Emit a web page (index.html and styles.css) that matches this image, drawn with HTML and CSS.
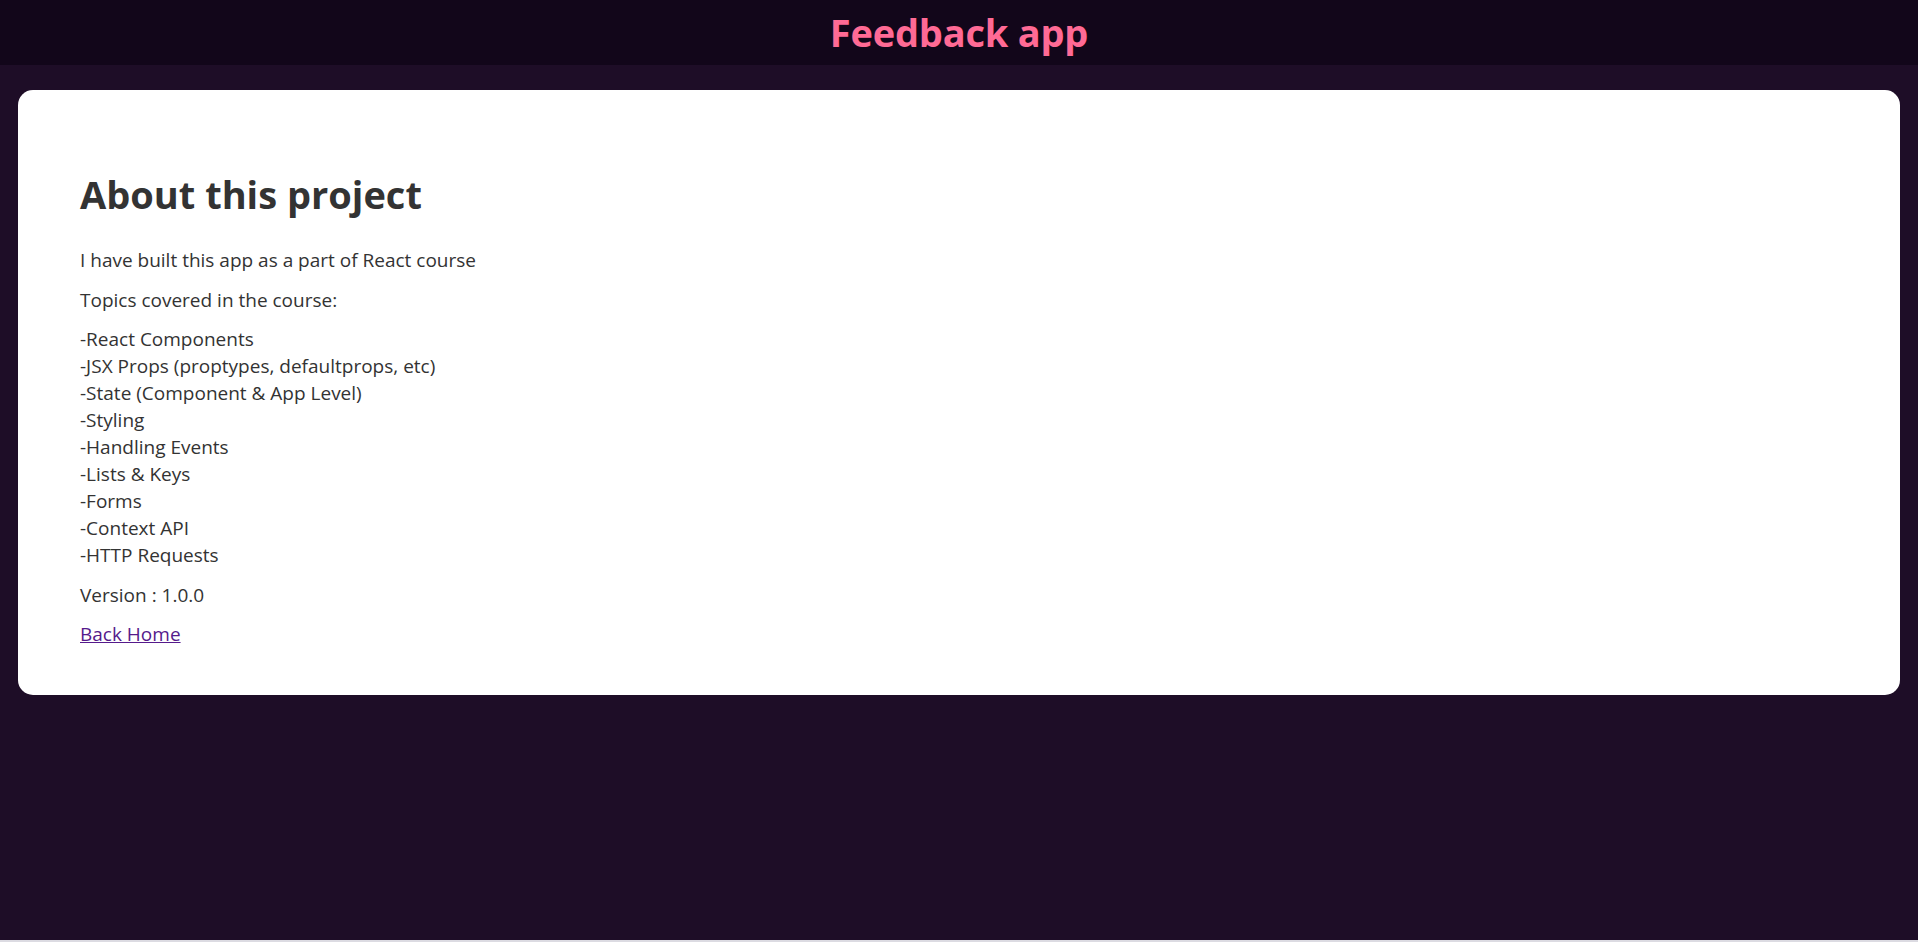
FILE: index.html
```html
<!DOCTYPE html>
<html lang="en">
<head>
<meta charset="utf-8">
<title>Feedback app</title>
<link rel="stylesheet" href="styles.css">
</head>
<body>
<div class="page">
  <header class="topbar">
    <h2 class="brand">Feedback app</h2>
  </header>
  <main class="content">
    <div class="card">
      <h1 class="title">About this project</h1>
      <p class="text">I have built this app as a part of React course</p>
      <p class="text">Topics covered in the course:</p>
      <p class="text">-React Components<br>-JSX Props (proptypes, defaultprops, etc)<br>-State (Component &amp; App Level)<br>-Styling<br>-Handling Events<br>-Lists &amp; Keys<br>-Forms<br>-Context API<br>-HTTP Requests</p>
      <p class="text">Version : 1.0.0</p>
      <p class="text"><a class="link" href="#">Back Home</a></p>
    </div>
  </main>
  <div class="edge"></div>
</div>
</body>
</html>
```

FILE: styles.css
```css
html, body {
  margin: 0;
  padding: 0;
}
body {
  background: #1e0d27;
  font-family: "Open Sans", "Noto Sans", sans-serif;
  color: #333;
}
.page {
  display: flex;
  flex-direction: column;
  height: 100vh;
}
.topbar {
  height: 65px;
  background: #12061a;
  display: flex;
  align-items: center;
  justify-content: center;
  flex-shrink: 0;
}
.brand {
  margin: 0;
  color: #ff6a95;
  font-size: 38px;
  line-height: 53px;
  font-weight: 700;
  letter-spacing: -0.2px;
}
.content {
  flex: 1;
  padding: 25px 18px;
}
.card {
  background: #fff;
  border-radius: 15px;
  padding: 52px 62px 34px;
}
.title {
  margin: 26px 0 26px;
  font-size: 38px;
  line-height: 53px;
  font-weight: 700;
  color: #333;
}
.text {
  margin: 12.5px 0;
  font-size: 19px;
  line-height: 27px;
}
.link {
  color: #551a8b;
}
.edge {
  height: 2px;
  background: #dcdbe2;
  flex-shrink: 0;
}
```
